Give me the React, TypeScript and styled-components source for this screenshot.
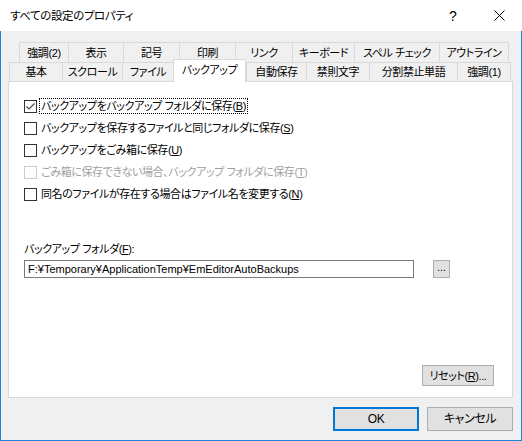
import React, { useState } from 'react';
import styled, { createGlobalStyle } from 'styled-components';

const uiFont = `"Liberation Sans", "Noto Sans CJK JP", sans-serif`;

const GlobalStyle = createGlobalStyle`
  html, body {
    margin: 0;
    padding: 0;
    background: #ffffff;
  }
  body {
    font-family: ${uiFont};
    font-size: 11px;
    letter-spacing: -0.4px;
    font-feature-settings: "palt" 1;
    color: #000000;
  }
  * {
    box-sizing: border-box;
  }
  button, input {
    font-family: ${uiFont};
    font-size: 11px;
    letter-spacing: -0.4px;
    font-feature-settings: "palt" 1;
    color: #000000;
  }
`;

type TabItem = { label: string; w: number };

// 上段・下段のタブ（幅はスクリーンショットから）
const upperTabs: TabItem[] = [
  { label: '強調(2)', w: 49 },
  { label: '表示', w: 55 },
  { label: '記号', w: 56 },
  { label: '印刷', w: 56 },
  { label: 'リンク', w: 57 },
  { label: 'キーボード', w: 62 },
  { label: 'スペル チェック', w: 85 },
  { label: 'アウトライン', w: 70 },
];

const lowerTabs: TabItem[] = [
  { label: '基本', w: 53 },
  { label: 'スクロール', w: 60 },
  { label: 'ファイル', w: 51 },
  { label: 'バックアップ', w: 73 },
  { label: '自動保存', w: 60 },
  { label: '禁則文字', w: 63 },
  { label: '分割禁止単語', w: 88 },
  { label: '強調(1)', w: 54 },
];

const options = [
  { text: 'バックアップをバックアップ フォルダに保存', key: 'B', checked: true, disabled: false },
  { text: 'バックアップを保存するファイルと同じフォルダに保存', key: 'S', checked: false, disabled: false },
  { text: 'バックアップをごみ箱に保存', key: 'U', checked: false, disabled: false },
  { text: 'ごみ箱に保存できない場合、バックアップ フォルダに保存', key: 'T', checked: false, disabled: true },
  { text: '同名のファイルが存在する場合はファイル名を変更する', key: 'N', checked: false, disabled: false },
];

const App: React.FC = () => {
  const [active, setActive] = useState('バックアップ');
  const [checks, setChecks] = useState(options.map((o) => o.checked));
  const [folder, setFolder] = useState('F:¥Temporary¥ApplicationTemp¥EmEditorAutoBackups');

  const toggle = (i: number) => {
    if (options[i].disabled) return;
    setChecks((prev) => prev.map((c, idx) => (idx === i ? !c : c)));
  };

  return (
    <>
      <GlobalStyle />
      <Window>
        <TitleBar>
          <Title>すべての設定のプロパティ</Title>
          <CaptionButton>?</CaptionButton>
          <CaptionButton>
            <svg width="11" height="11" viewBox="0 0 11 11">
              <path d="M0.5 0.5 L10.5 10.5 M10.5 0.5 L0.5 10.5" stroke="#000" strokeWidth="1" fill="none" />
            </svg>
          </CaptionButton>
        </TitleBar>
        <Body>
          <TabRow $indent={11}>
            {upperTabs.map((t) => (
              <Tab key={t.label} $w={t.w} $h={20} onClick={() => setActive(t.label)}>
                {t.label}
              </Tab>
            ))}
          </TabRow>
          <TabRow $indent={1}>
            {lowerTabs.map((t) =>
              t.label === active ? (
                <ActiveTab key={t.label} $w={t.w}>
                  {t.label}
                </ActiveTab>
              ) : (
                <Tab key={t.label} $w={t.w} $h={19} onClick={() => setActive(t.label)}>
                  {t.label}
                </Tab>
              )
            )}
          </TabRow>
          <Panel>
            <CheckList>
              {options.map((o, i) => (
                <CheckRow key={o.key} $disabled={o.disabled} onClick={() => toggle(i)}>
                  <Box $disabled={o.disabled}>
                    {checks[i] && (
                      <svg width="11" height="11" viewBox="0 0 11 11">
                        <path d="M1.5 5.5 L4 8 L9.5 2.5" stroke="#4a4a4a" strokeWidth="1.2" fill="none" />
                      </svg>
                    )}
                  </Box>
                  <CheckLabel $focused={i === 0}>
                    {o.text}(<u>{o.key}</u>)
                  </CheckLabel>
                </CheckRow>
              ))}
            </CheckList>
            <FolderLabel>
              バックアップ フォルダ(<u>F</u>):
            </FolderLabel>
            <FolderRow>
              <PathInput value={folder} onChange={(e) => setFolder(e.target.value)} />
              <BrowseButton>...</BrowseButton>
            </FolderRow>
            <ResetRow>
              <ResetButton>
                リセット(<u>R</u>)...
              </ResetButton>
            </ResetRow>
          </Panel>
          <Footer>
            <DialogButton $primary>OK</DialogButton>
            <DialogButton>キャンセル</DialogButton>
          </Footer>
        </Body>
      </Window>
    </>
  );
};

export default App;

const Window = styled.div`
  width: 522px;
  height: 441px;
  display: flex;
  flex-direction: column;
  background: #ffffff;
`;

const TitleBar = styled.div`
  height: 31px;
  display: flex;
  align-items: center;
  background: #ffffff;
  padding-left: 10px;
`;

const Title = styled.div`
  flex: 1;
  font-size: 11.5px;
  line-height: 16px;
`;

const CaptionButton = styled.div`
  width: 46px;
  height: 31px;
  display: flex;
  align-items: center;
  justify-content: center;
  font-size: 14px;
  letter-spacing: 0;
`;

const Body = styled.div`
  flex: 1;
  display: flex;
  flex-direction: column;
  background: #f0f0f0;
  border: 1px solid #1883d7;
  border-top: none;
  padding: 11px 8px 0 7px;
`;

const TabRow = styled.div<{ $indent: number }>`
  display: flex;
  align-items: flex-start;
  margin-left: ${(p) => p.$indent}px;
  position: relative;
  z-index: 1;
`;

const Tab = styled.div<{ $w: number; $h: number }>`
  width: ${(p) => p.$w}px;
  height: ${(p) => p.$h}px;
  display: flex;
  align-items: center;
  justify-content: center;
  white-space: nowrap;
  background: #f0f0f0;
  border-top: 1px solid #d9d9d9;
  border-left: 1px solid #d9d9d9;
  line-height: 16px;
  cursor: default;

  &:last-child {
    border-right: 1px solid #d9d9d9;
  }
`;

const ActiveTab = styled.div<{ $w: number }>`
  width: ${(p) => p.$w}px;
  height: 23px;
  margin-top: -3px;
  margin-bottom: -1px;
  padding-bottom: 3px;
  display: flex;
  align-items: center;
  justify-content: center;
  white-space: nowrap;
  background: #ffffff;
  border: 1px solid #d9d9d9;
  border-bottom: none;
  line-height: 16px;
  position: relative;
  z-index: 2;
`;

const Panel = styled.div`
  height: 317px;
  display: flex;
  flex-direction: column;
  background: #ffffff;
  border: 1px solid #d9d9d9;
  padding: 13px 18px 11px 15px;
`;

const CheckList = styled.div`
  display: flex;
  flex-direction: column;
`;

const CheckRow = styled.div<{ $disabled: boolean }>`
  height: 22px;
  display: flex;
  align-items: center;
  gap: 3px;
  color: ${(p) => (p.$disabled ? '#a0a0a0' : '#000000')};
  white-space: nowrap;
`;

const Box = styled.div<{ $disabled: boolean }>`
  width: 13px;
  height: 13px;
  flex: none;
  display: flex;
  align-items: center;
  justify-content: center;
  background: #ffffff;
  border: 1px solid ${(p) => (p.$disabled ? '#cccccc' : '#333333')};
`;

const CheckLabel = styled.span<{ $focused: boolean }>`
  line-height: 14px;
  padding: 0 1px;
  outline: ${(p) => (p.$focused ? '1px dotted #000000' : 'none')};
`;

const FolderLabel = styled.div`
  margin-top: 36px;
  line-height: 16px;
  white-space: nowrap;
`;

const FolderRow = styled.div`
  margin-top: 3px;
  display: flex;
  align-items: center;
  gap: 19px;
`;

const PathInput = styled.input`
  width: 390px;
  height: 18px;
  border: 1px solid #7a7a7a;
  padding: 0 3px;
  letter-spacing: 0;
  outline: none;
`;

const BrowseButton = styled.button`
  width: 17px;
  height: 18px;
  padding: 0 0 3px;
  background: #e1e1e1;
  border: 1px solid #adadad;
  font-size: 11px;
  line-height: 11px;
  letter-spacing: 0;
`;

const ResetRow = styled.div`
  margin-top: auto;
  display: flex;
  justify-content: flex-end;
`;

const ResetButton = styled.button`
  width: 72px;
  height: 21px;
  padding: 0;
  background: #e1e1e1;
  border: 1px solid #adadad;
  line-height: 16px;
  white-space: nowrap;
`;

const Footer = styled.div`
  display: flex;
  justify-content: flex-end;
  gap: 8px;
  padding-top: 9px;
`;

const DialogButton = styled.button<{ $primary?: boolean }>`
  width: 86px;
  height: 24px;
  padding: 0;
  background: #e1e1e1;
  border: ${(p) => (p.$primary ? '2px solid #0078d7' : '1px solid #adadad')};
  font-size: 12px;
  line-height: 16px;
`;
